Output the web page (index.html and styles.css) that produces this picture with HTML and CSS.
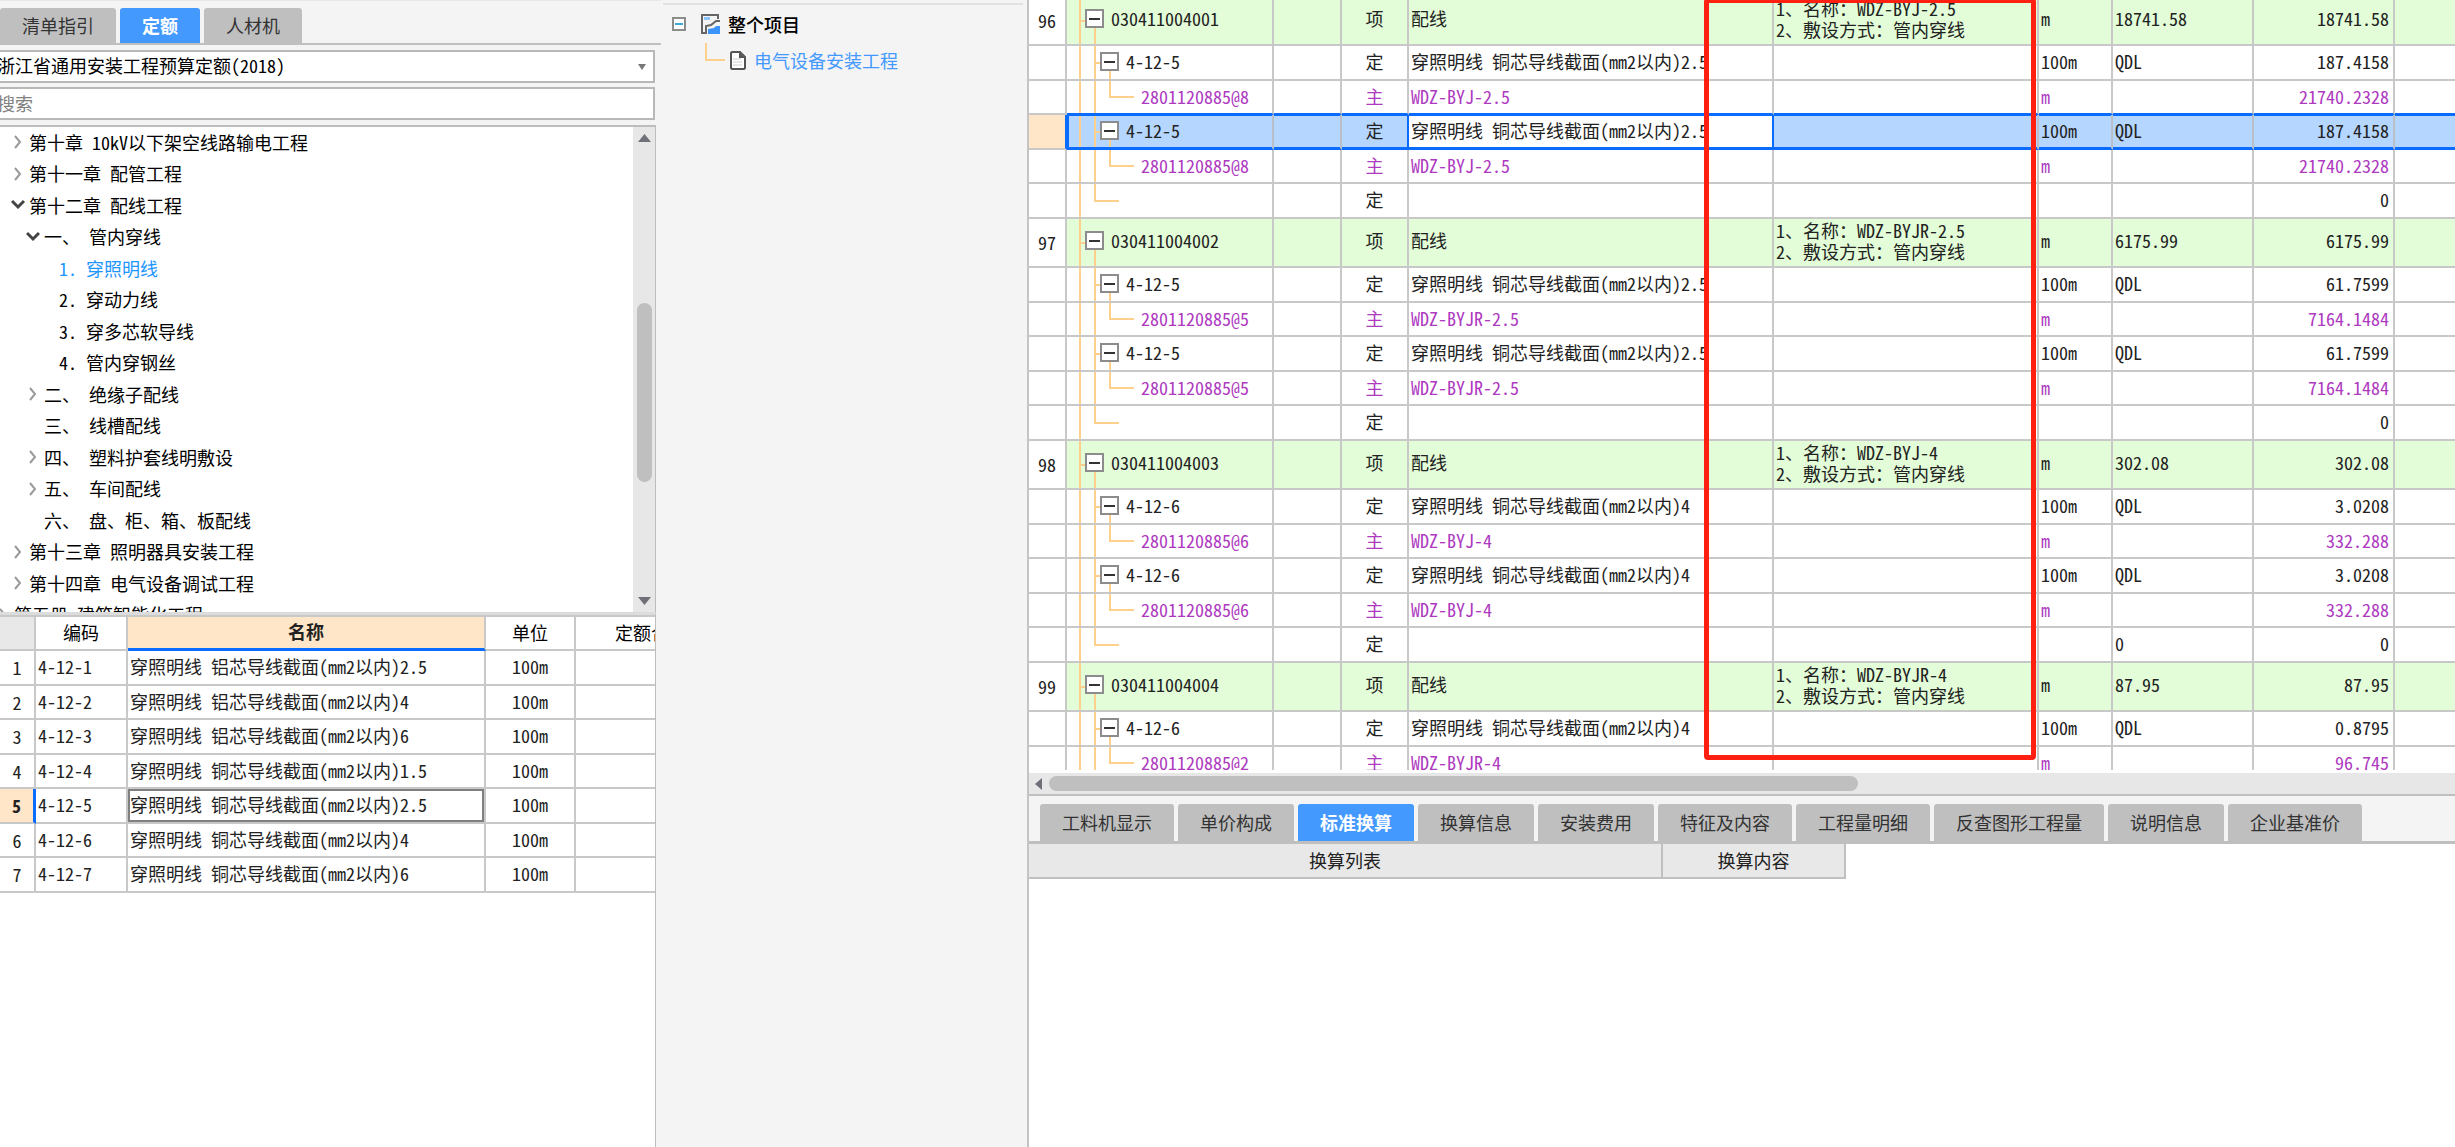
FILE: index.html
```html
<!DOCTYPE html>
<html lang="zh-CN">
<head>
<meta charset="utf-8">
<title>工程预算</title>
<link rel="stylesheet" href="styles.css">
</head>
<body>
<svg class="defs" width="0" height="0" aria-hidden="true">
  <symbol id="closed" viewBox="0 0 14 16"><path d="M4 2l5 6-5 6" fill="none" stroke="#9a9a9a" stroke-width="2"/></symbol>
  <symbol id="open" viewBox="0 0 14 16"><path d="M1 4l6 6 6-6" fill="none" stroke="#444" stroke-width="3"/></symbol>
</svg>
<div class="app">

<aside class="library">
  <nav class="tabs">
    <button class="tab">清单指引</button><button class="tab active">定额</button><button class="tab">人材机</button>
  </nav>
  <div class="filters">
    <div class="combo">
      <select aria-label="定额库"><option>浙江省通用安装工程预算定额(2018)</option></select>
      <svg width="8" height="6" viewBox="0 0 8 6"><path d="M0 0h8L4 6z" fill="#777"/></svg>
    </div>
    <input class="search" type="text" placeholder="搜索" aria-label="搜索">
  </div>
  <div class="tree-box">
    <ul class="tree">
      <li class="l1"><svg><use href="#closed"/></svg>第十章 10kV以下架空线路输电工程</li>
      <li class="l1"><svg><use href="#closed"/></svg>第十一章 配管工程</li>
      <li class="l1"><svg><use href="#open"/></svg>第十二章 配线工程</li>
      <li class="l2"><svg><use href="#open"/></svg>一、 管内穿线</li>
      <li class="l3 current">1. 穿照明线</li>
      <li class="l3">2. 穿动力线</li>
      <li class="l3">3. 穿多芯软导线</li>
      <li class="l3">4. 管内穿钢丝</li>
      <li class="l2"><svg><use href="#closed"/></svg>二、 绝缘子配线</li>
      <li class="l2"><svg></svg>三、 线槽配线</li>
      <li class="l2"><svg><use href="#closed"/></svg>四、 塑料护套线明敷设</li>
      <li class="l2"><svg><use href="#closed"/></svg>五、 车间配线</li>
      <li class="l2"><svg></svg>六、 盘、柜、箱、板配线</li>
      <li class="l1"><svg><use href="#closed"/></svg>第十三章 照明器具安装工程</li>
      <li class="l1"><svg><use href="#closed"/></svg>第十四章 电气设备调试工程</li>
      <li class="l0"><svg><use href="#closed"/></svg>第五册 建筑智能化工程</li>
    </ul>
    <div class="vscroll">
      <svg width="13" height="8" viewBox="0 0 13 8"><path d="M0 8h13L6.500 0z" fill="#6f7078"/></svg>
      <div class="vtrack"><div class="vthumb"></div></div>
      <svg width="13" height="8" viewBox="0 0 13 8"><path d="M0 0h13L6.500 8z" fill="#6f7078"/></svg>
    </div>
  </div>
  <div class="quota-box">
    <table class="grid quota">
      <colgroup><col class="q-no"><col class="q-code"><col class="q-name"><col class="q-unit"><col></colgroup>
      <thead><tr><th class="corner"></th><th>编码</th><th class="sorted">名称</th><th>单位</th><th class="cut">定额合价</th></tr></thead>
      <tbody>
        <tr><th>1</th><td>4-12-1</td><td>穿照明线 铝芯导线截面(mm2以内)2.5</td><td class="mid">100m</td><td></td></tr>
        <tr><th>2</th><td>4-12-2</td><td>穿照明线 铝芯导线截面(mm2以内)4</td><td class="mid">100m</td><td></td></tr>
        <tr><th>3</th><td>4-12-3</td><td>穿照明线 铝芯导线截面(mm2以内)6</td><td class="mid">100m</td><td></td></tr>
        <tr><th>4</th><td>4-12-4</td><td>穿照明线 铜芯导线截面(mm2以内)1.5</td><td class="mid">100m</td><td></td></tr>
        <tr class="picked"><th>5</th><td>4-12-5</td><td class="focus">穿照明线 铜芯导线截面(mm2以内)2.5</td><td class="mid">100m</td><td></td></tr>
        <tr><th>6</th><td>4-12-6</td><td>穿照明线 铜芯导线截面(mm2以内)4</td><td class="mid">100m</td><td></td></tr>
        <tr><th>7</th><td>4-12-7</td><td>穿照明线 铜芯导线截面(mm2以内)6</td><td class="mid">100m</td><td></td></tr>
      </tbody>
    </table>
  </div>
</aside>

<nav class="project">
  <div class="root">
    <button class="fold" aria-label="折叠"></button>
    <svg width="20" height="20" viewBox="0 0 20 20"><path d="M6 19H1V1h16v4" fill="none" stroke="#666" stroke-width="2"/><path d="M3 3h6v3H3z" fill="#8fc4ff"/><path d="M5 19v-7l5-1 5-4h4" fill="none" stroke="#666" stroke-width="2"/><path d="M7 20v-5l6-1 2-2h4v8z" fill="#3c94fb"/></svg>
    <span>整个项目</span>
  </div>
  <div class="leaf">
    <span class="elbow"></span>
    <svg width="16" height="19" viewBox="0 0 16 19"><path d="M2 1h8l5 5v11l-1 1H2l-1-1V2z" fill="#fff" stroke="#555" stroke-width="2"/><path d="M9 1l6 6H9z" fill="#555"/><path d="M3 8h8M3 11h9M3 14h9" stroke="#ccc"/></svg>
    <a href="#unit">电气设备安装工程</a>
  </div>
</nav>

<main class="work">
  <div class="sheet">
    <table class="grid bill">
      <colgroup><col class="b-no"><col class="b-code"><col class="b-tag"><col class="b-kind"><col class="b-name"><col class="b-feat"><col class="b-unit"><col class="b-expr"><col class="b-qty"><col></colgroup>
      <tbody>
        <tr class="item"><th>96</th><td class="code"><div><button class="tog" aria-label="折叠"></button>030411004001</div></td><td></td><td class="mid">项</td><td>配线</td><td class="feat">1、名称：WDZ-BYJ-2.5<br>2、敷设方式：管内穿线</td><td>m</td><td>18741.58</td><td class="num">18741.58</td><td></td></tr>
        <tr class="norm"><th></th><td class="code"><div><button class="tog" aria-label="折叠"></button>4-12-5</div></td><td></td><td class="mid">定</td><td>穿照明线 铜芯导线截面(mm2以内)2.5</td><td></td><td>100m</td><td>QDL</td><td class="num">187.4158</td><td></td></tr>
        <tr class="mat"><th></th><td class="code">2801120885@8</td><td></td><td class="mid">主</td><td>WDZ-BYJ-2.5</td><td></td><td>m</td><td></td><td class="num">21740.2328</td><td></td></tr>
        <tr class="norm selected"><th></th><td class="code"><div><button class="tog" aria-label="折叠"></button>4-12-5</div></td><td></td><td class="mid">定</td><td class="edit">穿照明线 铜芯导线截面(mm2以内)2.5</td><td></td><td>100m</td><td>QDL</td><td class="num">187.4158</td><td></td></tr>
        <tr class="mat"><th></th><td class="code">2801120885@8</td><td></td><td class="mid">主</td><td>WDZ-BYJ-2.5</td><td></td><td>m</td><td></td><td class="num">21740.2328</td><td></td></tr>
        <tr class="blank"><th></th><td class="code"></td><td></td><td class="mid">定</td><td></td><td></td><td></td><td></td><td class="num">0</td><td></td></tr>

        <tr class="item"><th>97</th><td class="code"><div><button class="tog" aria-label="折叠"></button>030411004002</div></td><td></td><td class="mid">项</td><td>配线</td><td class="feat">1、名称：WDZ-BYJR-2.5<br>2、敷设方式：管内穿线</td><td>m</td><td>6175.99</td><td class="num">6175.99</td><td></td></tr>
        <tr class="norm"><th></th><td class="code"><div><button class="tog" aria-label="折叠"></button>4-12-5</div></td><td></td><td class="mid">定</td><td>穿照明线 铜芯导线截面(mm2以内)2.5</td><td></td><td>100m</td><td>QDL</td><td class="num">61.7599</td><td></td></tr>
        <tr class="mat"><th></th><td class="code">2801120885@5</td><td></td><td class="mid">主</td><td>WDZ-BYJR-2.5</td><td></td><td>m</td><td></td><td class="num">7164.1484</td><td></td></tr>
        <tr class="norm"><th></th><td class="code"><div><button class="tog" aria-label="折叠"></button>4-12-5</div></td><td></td><td class="mid">定</td><td>穿照明线 铜芯导线截面(mm2以内)2.5</td><td></td><td>100m</td><td>QDL</td><td class="num">61.7599</td><td></td></tr>
        <tr class="mat"><th></th><td class="code">2801120885@5</td><td></td><td class="mid">主</td><td>WDZ-BYJR-2.5</td><td></td><td>m</td><td></td><td class="num">7164.1484</td><td></td></tr>
        <tr class="blank"><th></th><td class="code"></td><td></td><td class="mid">定</td><td></td><td></td><td></td><td></td><td class="num">0</td><td></td></tr>

        <tr class="item"><th>98</th><td class="code"><div><button class="tog" aria-label="折叠"></button>030411004003</div></td><td></td><td class="mid">项</td><td>配线</td><td class="feat">1、名称：WDZ-BYJ-4<br>2、敷设方式：管内穿线</td><td>m</td><td>302.08</td><td class="num">302.08</td><td></td></tr>
        <tr class="norm"><th></th><td class="code"><div><button class="tog" aria-label="折叠"></button>4-12-6</div></td><td></td><td class="mid">定</td><td>穿照明线 铜芯导线截面(mm2以内)4</td><td></td><td>100m</td><td>QDL</td><td class="num">3.0208</td><td></td></tr>
        <tr class="mat"><th></th><td class="code">2801120885@6</td><td></td><td class="mid">主</td><td>WDZ-BYJ-4</td><td></td><td>m</td><td></td><td class="num">332.288</td><td></td></tr>
        <tr class="norm"><th></th><td class="code"><div><button class="tog" aria-label="折叠"></button>4-12-6</div></td><td></td><td class="mid">定</td><td>穿照明线 铜芯导线截面(mm2以内)4</td><td></td><td>100m</td><td>QDL</td><td class="num">3.0208</td><td></td></tr>
        <tr class="mat"><th></th><td class="code">2801120885@6</td><td></td><td class="mid">主</td><td>WDZ-BYJ-4</td><td></td><td>m</td><td></td><td class="num">332.288</td><td></td></tr>
        <tr class="blank"><th></th><td class="code"></td><td></td><td class="mid">定</td><td></td><td></td><td></td><td>0</td><td class="num">0</td><td></td></tr>

        <tr class="item"><th>99</th><td class="code"><div><button class="tog" aria-label="折叠"></button>030411004004</div></td><td></td><td class="mid">项</td><td>配线</td><td class="feat">1、名称：WDZ-BYJR-4<br>2、敷设方式：管内穿线</td><td>m</td><td>87.95</td><td class="num">87.95</td><td></td></tr>
        <tr class="norm"><th></th><td class="code"><div><button class="tog" aria-label="折叠"></button>4-12-6</div></td><td></td><td class="mid">定</td><td>穿照明线 铜芯导线截面(mm2以内)4</td><td></td><td>100m</td><td>QDL</td><td class="num">0.8795</td><td></td></tr>
        <tr class="mat"><th></th><td class="code">2801120885@2</td><td></td><td class="mid">主</td><td>WDZ-BYJR-4</td><td></td><td>m</td><td></td><td class="num">96.745</td><td></td></tr>
      </tbody>
    </table>
  </div>
  <div class="marker"></div>
  <section class="detail">
    <div class="hscroll">
      <svg width="7" height="12" viewBox="0 0 7 12"><path d="M7 0v12L0 6z" fill="#6f7078"/></svg>
      <div class="hthumb"></div>
    </div>
    <nav class="tabs lower">
      <button class="tab">工料机显示</button><button class="tab">单价构成</button><button class="tab active">标准换算</button><button class="tab">换算信息</button><button class="tab">安装费用</button><button class="tab">特征及内容</button><button class="tab">工程量明细</button><button class="tab">反查图形工程量</button><button class="tab">说明信息</button><button class="tab">企业基准价</button>
    </nav>
    <table class="convert">
      <thead><tr><th class="c-list">换算列表</th><th class="c-body">换算内容</th></tr></thead>
    </table>
  </section>
</main>
</div>
</body>
</html>
```
FILE: styles.css
```css
* { box-sizing: border-box; }

body {
  margin: 0;
  background: #f4f4f4;
  color: #222;
  font: 18px/21px "Noto Sans CJK SC", sans-serif;
  /* half-width Latin forms, so figures line up with the full-width text */
  font-feature-settings: "hwid";
}

button, input, select { font: inherit; font-feature-settings: inherit; color: inherit; border-radius: 0; }
.defs { display: block; height: 0; }

.app { display: flex; height: 100vh; overflow: hidden; }

/* tabs */
.tabs {
  display: flex;
  gap: 4px;
  height: 45px;
  padding-top: 8px;
  border-bottom: 2px solid #bfbfbf;
}
.tab {
  padding: 0 22px;
  border: 0;
  border-radius: 3px 3px 0 0;
  background: #bfbfbf;
  color: #333;
  white-space: nowrap;
}
.tab.active { background: #4499ff; color: #fff; font-weight: bold; }

/* library panel */
.library {
  display: flex;
  flex: none;
  flex-direction: column;
  width: 661px;
  border-top: 1px solid #e8e8e8;
}
.library .tabs { height: 44px; padding-top: 7px; }
.filters {
  display: grid;
  gap: 4px;
  margin: 5px 6px 5px -5px;
}
.combo { display: grid; grid-template-columns: 1fr; align-items: center; }
.combo select, .combo svg { grid-area: 1 / 1; }
.combo svg { justify-self: end; margin-right: 9px; pointer-events: none; }
.combo select, .search {
  width: 100%;
  height: 33px;
  padding: 0 0 2px;
  border: 2px solid #b8b8b8;
  background: #fff;
  appearance: none;
  outline: 0;
}
.combo select { color: #000; }
.search::placeholder { color: #808080; opacity: 1; }

.tree-box {
  display: flex;
  flex: 1;
  min-height: 0;
  margin-right: 5px;
  border-top: 2px solid #bdbdbd;
  border-right: 1px solid #bdbdbd;
  background: #fff;
}
.tree {
  flex: 1;
  margin: 0;
  padding: 0;
  overflow: hidden;
  color: #000;
  list-style: none;
}
.tree li { display: flex; align-items: center; height: 32px; padding-bottom: 2px; white-space: nowrap; }
.tree li:nth-child(even) { height: 31px; }
.tree svg { flex: none; width: 14px; height: 16px; margin-right: 4px; }
.tree .l0 { margin-left: -4px; }
.tree .l1 { padding-left: 11px; }
.tree .l2 { padding-left: 26px; }
.tree .l3 { padding-left: 59px; }
.tree .current { color: #1e96ff; }

.vscroll {
  display: flex;
  flex-direction: column;
  align-items: center;
  width: 22px;
  padding: 7px 0;
  background: #e7e7e7;
}
.vtrack { display: flex; flex: 1; flex-direction: column; justify-content: flex-end; }
.vthumb { width: 15px; height: 179px; margin-bottom: 115px; border-radius: 8px; background: #bfbfbf; }

.quota-box {
  height: 535px;
  margin-right: 5px;
  border-top: 3px solid #dcdcdc;
  border-right: 1px solid #bdbdbd;
  background: #fff;
  overflow: hidden;
}

/* grids */
.grid { width: 100%; border-collapse: separate; border-spacing: 0; table-layout: fixed; }
.grid th, .grid td {
  padding: 0 2px 2px;
  border: 0 solid #c8c8c8;
  border-width: 0 2px 2px 0;
  overflow: hidden;
  text-align: left;
  font-weight: normal;
  white-space: nowrap;
}
.grid th:last-child, .grid td:last-child { border-right: 0; }
.grid tbody th { padding: 0; text-align: center; }
.grid .mid { text-align: center; }
.grid .num { text-align: right; }

.quota { border-top: 2px solid #c8c8c8; }
.quota thead th { height: 34px; color: #000; text-align: center; }
.quota thead .corner { background: #e8e8e8; }
.quota thead .sorted { background: #ffe6c8; border-bottom: 3px solid #0a6cff; color: #222; font-weight: bold; }
.quota thead .cut { padding: 0 0 2px 39px; text-align: left; text-overflow: clip; }
.quota tbody td, .quota tbody th { height: 35px; }
.quota tbody tr:nth-child(even) > * { height: 34px; }
.quota .picked th { border-right: 3px solid #0a6cff; background: #ffe6c8; font-weight: bold; }
.quota .focus { box-shadow: inset 0 0 0 2px #808080; }
.q-no { width: 36px; }
.q-code { width: 92px; }
.q-name { width: 358px; }
.q-unit { width: 90px; }

/* project tree */
.project { flex: none; width: 360px; margin: 3px 4px 0 2px; border-top: 2px solid #e2e2e2; }
.root, .leaf { display: flex; align-items: center; }
.root { height: 38px; padding-left: 9px; color: #000; font-weight: 500; }
.root svg { margin: 0 7px 0 15px; }
.fold, .tog {
  flex: none;
  padding: 0;
  border: 2px solid #8c8c8c;
  background: linear-gradient(#333, #333) center / 11px 2px no-repeat #fff;
}
.fold { width: 14px; height: 14px; background-image: linear-gradient(#3aa8d8, #3aa8d8); background-size: 8px 2px; }
.leaf { height: 34px; padding-left: 42px; }
.leaf .elbow { align-self: flex-start; width: 20px; height: 18px; border: 0 solid #ffd08c; border-width: 0 0 2px 2px; }
.leaf svg { margin: 0 8px 0 5px; }
.leaf a { color: #4499ff; text-decoration: none; }

/* bill of quantities */
.work {
  position: relative;
  display: flex;
  flex: 1;
  flex-direction: column;
  min-width: 0;
  border-left: 2px solid #c4c4c4;
  background: #fff;
  overflow: hidden;
}
.sheet { flex: 1; min-height: 0; margin-bottom: 3px; overflow: hidden; }
.bill { margin-top: -3px; }
.b-no { width: 38px; }
.b-code { width: 207px; }
.b-tag { width: 68px; }
.b-kind { width: 67px; }
.b-name { width: 365px; }
.b-feat { width: 265px; }
.b-unit { width: 74px; }
.b-expr { width: 141px; }
.b-qty { width: 141px; }

.bill .item > * { height: 49px; }
.bill .norm > *, .bill .blank > * { height: 35px; }
.bill .mat > * { height: 34px; }
.bill .item td { padding-bottom: 4px; background-color: #e2fdd8; }
.bill .mat { color: #ae3abf; }
.bill .code div { display: flex; align-items: center; gap: 7px; }
.bill .item .code { padding-left: 18px; }
.bill .norm .code { padding-left: 33px; }
.bill .mat .code { padding-left: 74px; }
.bill .num { padding-right: 4px; }
.tog { width: 19px; height: 19px; }

/* connector lines of the outline */
.bill .code {
  --line: linear-gradient(#ffd08c, #ffd08c);
  background-repeat: no-repeat;
}
.bill .item .code {
  background-image: var(--line), var(--line), var(--line);
  background-position: 12px 0, 12px 50%, 27px 100%;
  background-size: 2px 100%, 8px 2px, 2px 50%;
}
.bill .norm .code {
  background-image: var(--line), var(--line), var(--line), var(--line);
  background-position: 12px 0, 27px 0, 27px 50%, 42px 100%;
  background-size: 2px 100%, 2px 100%, 8px 2px, 2px 50%;
}
.bill .mat .code {
  background-image: var(--line), var(--line), var(--line), var(--line);
  background-position: 12px 0, 27px 0, 42px 0, 42px 50%;
  background-size: 2px 100%, 2px 100%, 2px 50%, 25px 2px;
}
.bill .blank .code {
  background-image: var(--line), var(--line), var(--line);
  background-position: 12px 0, 27px 0, 27px 50%;
  background-size: 2px 100%, 2px 50%, 25px 2px;
}

.bill .selected th { border-right-color: #0a6cff; background: #ffe6c8; }
.bill tr:has(+ .selected) td { border-bottom-color: #0a6cff; }
.bill .selected td {
  border-color: #b8bfc9;
  border-bottom-color: #0a6cff;
  background-color: #b5d6ff;
  box-shadow: inset 0 1px #0a6cff, inset 0 -1px #0a6cff;
}
.bill .selected .code { box-shadow: inset 2px 0 #0a6cff, inset 0 1px #0a6cff, inset 0 -1px #0a6cff; }
.bill .selected .mid, .bill .selected .edit { border-right-color: #0a6cff; }
.bill .selected .edit { background-color: #fff; }

/* review frame drawn over the feature column */
.marker {
  position: absolute;
  top: -2px;
  left: 675px;
  width: 332px;
  height: 762px;
  border: 5px solid #ff2012;
  border-radius: 4px;
  pointer-events: none;
}

/* detail pane */
.detail { height: 374px; }
.hscroll {
  display: flex;
  align-items: center;
  gap: 7px;
  height: 21px;
  padding-left: 6px;
  background: #e7e7e7;
}
.hthumb { width: 57%; height: 15px; border-radius: 8px; background: #bfbfbf; }
.lower {
  height: 50px;
  padding: 8px 0 0 11px;
  border-top: 2px solid #bfbfbf;
  border-bottom-width: 3px;
  background: #f4f4f4;
}
.convert { border-collapse: separate; border-spacing: 0; table-layout: fixed; width: 817px; }
.convert th {
  height: 35px;
  padding: 0;
  border: 0 solid #c0c0c0;
  border-width: 0 2px 2px 0;
  background: #e8e8e8;
  font-weight: normal;
}
.c-list { width: 634px; }
```
